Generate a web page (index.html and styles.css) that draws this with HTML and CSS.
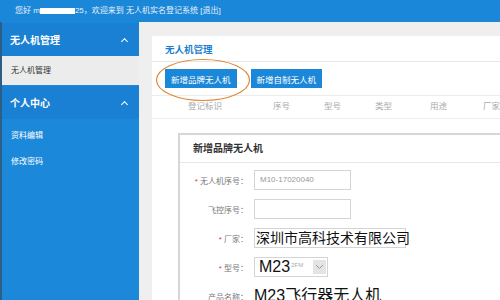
FILE: index.html
```html
<!DOCTYPE html>
<html lang="zh">
<head>
  <meta charset="UTF-8">
  <title>无人机实名登记系统</title>
  <link rel="stylesheet" href="styles.css">
</head>
<body>

  <div class="topbar">
    您好 m<span class="masked"></span>25，欢迎来到 无人机实名登记系统 [退出]
  </div>

  <div class="layout">
    <aside class="sidebar">
      <div class="menu-head">无人机管理<span class="caret"></span></div>
      <div class="menu-item active">无人机管理</div>
      <div class="menu-head">个人中心<span class="caret"></span></div>
      <div class="menu-item">资料编辑</div>
      <div class="menu-item">修改密码</div>
    </aside>

    <main class="main">
      <div class="panel">
        <div class="panel-title">无人机管理</div>

        <div class="toolbar">
          <button class="btn">新增品牌无人机</button>
          <button class="btn">新增自制无人机</button>
          <!-- annotation circle drawn over the first button -->
          <svg class="mark" width="96" height="44" viewBox="0 0 96 44">
            <ellipse cx="48" cy="22" rx="46.5" ry="20.5" fill="none" stroke="#e0883a" stroke-width="1.2"/>
          </svg>
        </div>

        <div class="thead">
          <span class="c1">登记标识</span>
          <span class="c2">序号</span>
          <span class="c3">型号</span>
          <span class="c4">类型</span>
          <span class="c5">用途</span>
          <span>厂家</span>
        </div>

        <div class="dialog">
          <div class="dialog-title">新增品牌无人机</div>
          <div class="form">
            <div class="row">
              <label><i>*</i> 无人机序号：</label>
              <div class="field">M10-17020040</div>
            </div>
            <div class="row">
              <label>飞控序号：</label>
              <div class="field"></div>
            </div>
            <div class="row">
              <label><i>*</i> 厂家：</label>
              <div class="field wide big">深圳市高科技术有限公司</div>
            </div>
            <div class="row">
              <label><i>*</i> 型号：</label>
              <div class="field select">
                <span class="big">M23</span><span class="ghost">2FM</span>
                <span class="arrow">
                  <svg width="9" height="6" viewBox="0 0 9 6"><path d="M1 1 L4.5 4.5 L8 1" fill="none" stroke="#999" stroke-width="1"/></svg>
                </span>
              </div>
            </div>
            <div class="row">
              <label>产品名称：</label>
              <div class="plain big">M23飞行器无人机</div>
            </div>
          </div>
        </div>
      </div>
    </main>
  </div>

</body>
</html>
```

FILE: styles.css
```css
body {
  margin: 0;
  width: 500px;
  height: 300px;
  overflow: hidden;
  font-family: "Liberation Sans", "Noto Sans CJK SC", sans-serif;
  font-size: 8px;
  background-color: #efefef;
}

.topbar {
  height: 22px;
  line-height: 22px;
  padding-left: 15px;
  background-color: #1a87d8;
  color: #e8f1fa;
  font-size: 8px;
  white-space: nowrap;
}

.masked {
  display: inline-block;
  width: 35px;
  height: 6px;
  background-color: #fff;
  vertical-align: middle;
}

.layout {
  display: flex;
  height: 278px;
}

.sidebar {
  width: 137px;
  flex-shrink: 0;
  background-color: #1b88da;
  border-left: 2px solid #2c5e86;
}

.menu-head {
  display: flex;
  justify-content: space-between;
  align-items: center;
  height: 33px;
  padding: 0 12px 0 8px;
  margin-top: 1px;
  background-color: #1a80d3;
  color: #fff;
  font-size: 10px;
  font-weight: bold;
}

.caret {
  width: 4px;
  height: 4px;
  margin-top: 3px;
  border-left: 1.5px solid #fff;
  border-top: 1.5px solid #fff;
  transform: rotate(45deg);
}

.menu-item {
  height: 26px;
  line-height: 26px;
  padding-left: 9px;
  color: #fff;
  font-size: 8px;
}

.menu-item.active {
  height: 29px;
  line-height: 29px;
  background-color: #ececec;
  color: #333;
}

.menu-head + .menu-item:not(.active) {
  margin-top: 4px;
}

.main {
  flex: 1;
  padding: 14px 0 0 13px;
}

.panel {
  height: 100%;
  background-color: #fff;
}

.panel-title {
  height: 25px;
  line-height: 27px;
  padding-left: 13px;
  border-bottom: 1px solid #e6e6e6;
  color: #1a7fd0;
  font-size: 9.5px;
  font-weight: bold;
}

.toolbar {
  position: relative;
  display: flex;
  gap: 14px;
  height: 26px;
  padding: 7px 0 0 13px;
  border-bottom: 1px solid #ececec;
}

.btn {
  height: 19px;
  padding: 0 6px;
  border: none;
  background-color: #1a87d8;
  color: #fff;
  font-family: inherit;
  font-size: 8.5px;
}

.mark {
  position: absolute;
  left: 3px;
  top: -4px;
}

.thead {
  display: flex;
  height: 22px;
  line-height: 20px;
  padding-left: 36px;
  border-bottom: 1px solid #eee;
  color: #aaa;
  font-size: 8.5px;
  white-space: nowrap;
}

.thead .c1 { width: 85px; }
.thead .c2 { width: 51px; }
.thead .c3 { width: 51px; }
.thead .c4 { width: 55px; }
.thead .c5 { width: 53px; }

.dialog {
  margin: 14px 0 0 26px;
  height: 200px;
  border: 2px solid #d6d6d6;
  border-right: none;
  background-color: #fff;
}

.dialog-title {
  height: 27px;
  line-height: 28px;
  padding-left: 13px;
  border-bottom: 1px solid #e6e6e6;
  color: #333;
  font-size: 10px;
  font-weight: bold;
}

.form {
  display: flex;
  flex-direction: column;
  gap: 9px;
  padding-top: 7px;
}

.row {
  display: flex;
  align-items: center;
  height: 20px;
  gap: 6px;
}

.row label {
  width: 68px;
  text-align: right;
  color: #777;
  font-size: 8px;
  white-space: nowrap;
}

.row label i {
  font-style: normal;
  color: #e34;
}

.field {
  position: relative;
  box-sizing: border-box;
  width: 97px;
  height: 20px;
  line-height: 18px;
  padding-left: 5px;
  border: 1px solid #d4d4d4;
  color: #999;
  font-size: 8px;
  white-space: nowrap;
}

.field.wide {
  width: 152px;
  padding-left: 1px;
}

.big {
  color: #111;
  font-size: 14px;
  line-height: 18px;
  white-space: nowrap;
}

.field.select {
  display: flex;
  align-items: center;
  width: 74px;
  padding-left: 4px;
}

.field.select .big {
  font-size: 16px;
}

.ghost {
  margin-left: 1px;
  margin-top: -5px;
  color: #aaa;
  font-size: 6px;
}

.arrow {
  display: flex;
  align-items: center;
  justify-content: center;
  margin-left: auto;
  margin-right: 1px;
  width: 13px;
  height: 14px;
  background-color: #e4e4e4;
}

.plain {
  font-size: 16px;
}
```
